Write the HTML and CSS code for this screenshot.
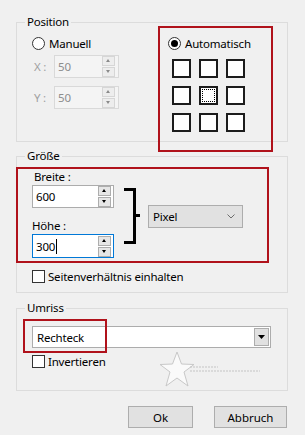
FILE: index.html
```html
<!DOCTYPE html>
<html lang="de">
<head>
    <meta charset="UTF-8">
    <title>Position und Größe</title>
    <link rel="stylesheet" href="styles.css">
</head>
<body>
    <div class="dialog">
        <fieldset class="group group-position">
            <legend>Position</legend>
            <div class="position-body">
                <div class="manual">
                    <div class="radio"><span class="radio-mark"></span>Manuell</div>
                    <div class="coord coord-x">
                        <span class="coord-label">X :</span>
                        <div class="spin spin-disabled spin-coord">
                            <span class="spin-value">50</span>
                            <span class="spin-buttons"><span class="spin-btn up"></span><span class="spin-btn down"></span></span>
                        </div>
                    </div>
                    <div class="coord coord-y">
                        <span class="coord-label">Y :</span>
                        <div class="spin spin-disabled spin-coord">
                            <span class="spin-value">50</span>
                            <span class="spin-buttons"><span class="spin-btn up"></span><span class="spin-btn down"></span></span>
                        </div>
                    </div>
                </div>
                <div class="auto">
                    <div class="radio"><span class="radio-mark checked"></span>Automatisch</div>
                    <div class="anchor-grid">
                        <span class="anchor"></span><span class="anchor"></span><span class="anchor"></span>
                        <span class="anchor"></span><span class="anchor focus"></span><span class="anchor"></span>
                        <span class="anchor"></span><span class="anchor"></span><span class="anchor"></span>
                    </div>
                </div>
            </div>
        </fieldset>

        <fieldset class="group group-size">
            <legend>Größe</legend>
            <div class="size-body">
                <div class="size-row">
                    <div class="size-fields">
                        <div class="field-label">Breite :</div>
                        <div class="spin spin-size">
                            <span class="spin-value">600</span>
                            <span class="spin-buttons"><span class="spin-btn up"></span><span class="spin-btn down"></span></span>
                        </div>
                        <div class="field-label field-label-low">Höhe :</div>
                        <div class="spin spin-size spin-focus">
                            <span class="spin-value">300<span class="caret"></span></span>
                            <span class="spin-buttons"><span class="spin-btn up"></span><span class="spin-btn down"></span></span>
                        </div>
                    </div>
                    <div class="bracket"></div>
                    <div class="select select-unit">
                        <span>Pixel</span>
                        <svg class="chevron" width="8" height="5" viewBox="0 0 8 5"><path d="M0.5 0.5 L4 4 L7.5 0.5" fill="none" stroke="#6d6d6d" stroke-width="1"/></svg>
                    </div>
                </div>
                <div class="check check-ratio"><span class="check-box"></span>Seitenverhältnis einhalten</div>
            </div>
        </fieldset>

        <fieldset class="group group-outline">
            <legend>Umriss</legend>
            <div class="outline-body">
                <div class="combo">
                    <span>Rechteck</span>
                    <span class="combo-btn"><svg width="7" height="4" viewBox="0 0 7 4"><path d="M0 0 H7 L3.5 4 Z" fill="#000"/></svg></span>
                </div>
                <div class="check check-invert"><span class="check-box"></span>Invertieren</div>
            </div>
        </fieldset>

        <div class="actions">
            <button class="btn btn-ok">Ok</button>
            <button class="btn btn-cancel">Abbruch</button>
        </div>

        <!-- annotation overlays -->
        <div class="highlight highlight-auto"></div>
        <div class="highlight highlight-size"></div>
        <div class="highlight highlight-outline"></div>
        <svg class="watermark" width="110" height="40" viewBox="0 0 110 40">
            <path d="M19 2 L23.5 14 L36 14.5 L26 22 L30 36 L19 28 L8 36 L12 22 L2 14.5 L14.5 14 Z" fill="#fafafa" stroke="#c8c8c8" stroke-width="1"/>
            <path d="M32 17 H60 M32 21 H102" stroke="#c4c4c4" stroke-width="1.2" stroke-dasharray="2 1"/>
        </svg>
    </div>
</body>
</html>
```

FILE: styles.css
```css
body {
    margin: 0;
    background: #f0f0f0;
    font-family: "Noto Sans", "Liberation Sans", sans-serif;
    font-size: 11.5px;
    letter-spacing: -0.2px;
    color: #000;
}
.dialog {
    position: relative;
    width: 272px;
    padding: 14px 17px 0 16px;
}

/* group boxes */
.group {
    margin: 0;
    padding: 0;
    border: 1px solid #dcdcdc;
    min-width: 0;
}
.group legend {
    margin-left: 8px;
    padding: 0 2px;
    height: 16px;
    line-height: 16px;
}
.group-size {
    margin-top: 6px;
}
.group-outline {
    margin-top: 7px;
}

/* position */
.position-body {
    display: flex;
    height: 111px;
}
.manual {
    width: 136px;
    padding-left: 15px;
}
.radio {
    display: flex;
    align-items: center;
    gap: 4px;
    height: 13px;
    line-height: 13px;
    margin-top: 7px;
}
.radio-mark {
    position: relative;
    width: 13px;
    height: 13px;
    box-sizing: border-box;
    border: 1px solid #333;
    border-radius: 50%;
    background: #fff;
}
.radio-mark.checked::after {
    content: '';
    position: absolute;
    inset: 2px;
    border-radius: 50%;
    background: #000;
}
.coord {
    display: flex;
    align-items: center;
}
.coord-x {
    margin-top: 5px;
}
.coord-y {
    margin-top: 8px;
}
.coord-label {
    width: 20px;
    padding-left: 2px;
    color: #a0a0a0;
}

/* spin boxes */
.spin {
    display: flex;
    align-items: center;
    justify-content: space-between;
    box-sizing: border-box;
    height: 23px;
    border: 1px solid #acacac;
    background: #fff;
    padding: 0 2px 0 3px;
}
.spin-coord {
    width: 65px;
    padding-right: 3px;
}
.spin-size {
    width: 82px;
}
.spin-disabled {
    border-color: #d9d9d9;
    background: #f4f4f4;
    color: #8d8d8d;
}
.spin-focus {
    height: 24px;
    border-color: #0078d7;
}
.spin-buttons {
    display: flex;
    flex-direction: column;
    gap: 1px;
}
.spin-btn {
    position: relative;
    width: 11px;
    height: 8px;
    border: 1px solid #adadad;
    background: #e6e6e6;
}
.spin-disabled .spin-btn {
    border-color: #d6d6d6;
    background: #ededed;
}
.spin-btn::after {
    content: '';
    position: absolute;
    left: 3px;
    top: 2px;
    border-left: 2.5px solid transparent;
    border-right: 2.5px solid transparent;
}
.spin-btn.up::after {
    border-bottom: 3px solid #000;
}
.spin-btn.down::after {
    border-top: 3px solid #000;
}
.spin-disabled .spin-btn.up::after {
    border-bottom-color: #8a8a8a;
}
.spin-disabled .spin-btn.down::after {
    border-top-color: #8a8a8a;
}
.caret {
    display: inline-block;
    width: 1px;
    height: 15px;
    margin-left: 1px;
    background: #000;
    vertical-align: -3px;
}

/* anchor grid */
.anchor-grid {
    display: grid;
    grid-template-columns: repeat(3, 19px);
    grid-auto-rows: 19px;
    gap: 8px;
    margin: 9px 0 0 4px;
}
.anchor {
    position: relative;
    box-sizing: border-box;
    border: 2px solid #1c1c1c;
    background: #fff;
}
.anchor.focus::after {
    content: '';
    position: absolute;
    inset: 1px;
    border: 1px dotted #000;
}

/* size */
.size-body {
    height: 128px;
    padding-left: 15px;
}
.size-row {
    display: flex;
    align-items: flex-start;
}
.field-label {
    height: 16px;
    line-height: 16px;
    margin-top: 5px;
    padding-left: 2px;
}
.field-label-low {
    margin-top: 10px;
    padding-left: 0;
}
.bracket {
    position: relative;
    width: 9px;
    height: 50px;
    margin: 24px 0 0 10px;
    border: 3px solid #000;
    border-left: none;
}
.bracket::after {
    content: '';
    position: absolute;
    right: -7px;
    top: 23px;
    width: 4px;
    height: 3px;
    background: #000;
}
.select {
    display: flex;
    align-items: center;
    justify-content: space-between;
    box-sizing: border-box;
    border: 1px solid #adadad;
    background: #e1e1e1;
}
.select-unit {
    width: 95px;
    height: 23px;
    margin: 41px 0 0 12px;
    padding: 0 7px 0 4px;
}
.check {
    display: flex;
    align-items: center;
    gap: 3px;
    height: 13px;
    line-height: 13px;
}
.check-box {
    width: 13px;
    height: 13px;
    box-sizing: border-box;
    border: 1px solid #333;
    background: #fff;
}
.check-ratio {
    margin-top: 12px;
}

/* outline */
.outline-body {
    height: 64px;
    padding-left: 15px;
}
.combo {
    display: flex;
    align-items: center;
    justify-content: space-between;
    box-sizing: border-box;
    width: 239px;
    height: 22px;
    margin-top: 10px;
    padding: 0 1px 0 4px;
    border: 1px solid #acacac;
    background: #fff;
}
.combo-btn {
    display: flex;
    align-items: center;
    justify-content: center;
    box-sizing: border-box;
    width: 15px;
    height: 18px;
    border: 1px solid #adadad;
    background: #e1e1e1;
}
.check-invert {
    margin-top: 7px;
}

/* buttons */
.actions {
    display: flex;
    justify-content: flex-end;
    gap: 21px;
    margin-top: 15px;
    padding-right: 1px;
}
.btn {
    box-sizing: border-box;
    height: 22px;
    border: 1px solid #adadad;
    background: #e1e1e1;
    font: inherit;
    color: #000;
    padding: 0;
}
.btn-ok {
    width: 65px;
}
.btn-cancel {
    width: 73px;
}

/* annotation overlays */
.highlight {
    position: absolute;
    border: 2px solid #b0121b;
}
.highlight-auto {
    left: 158px;
    top: 26px;
    width: 111px;
    height: 122px;
}
.highlight-size {
    left: 16px;
    top: 167px;
    width: 249px;
    height: 92px;
}
.highlight-outline {
    left: 23px;
    top: 319px;
    width: 80px;
    height: 30px;
}
.watermark {
    position: absolute;
    left: 158px;
    top: 350px;
}
```
